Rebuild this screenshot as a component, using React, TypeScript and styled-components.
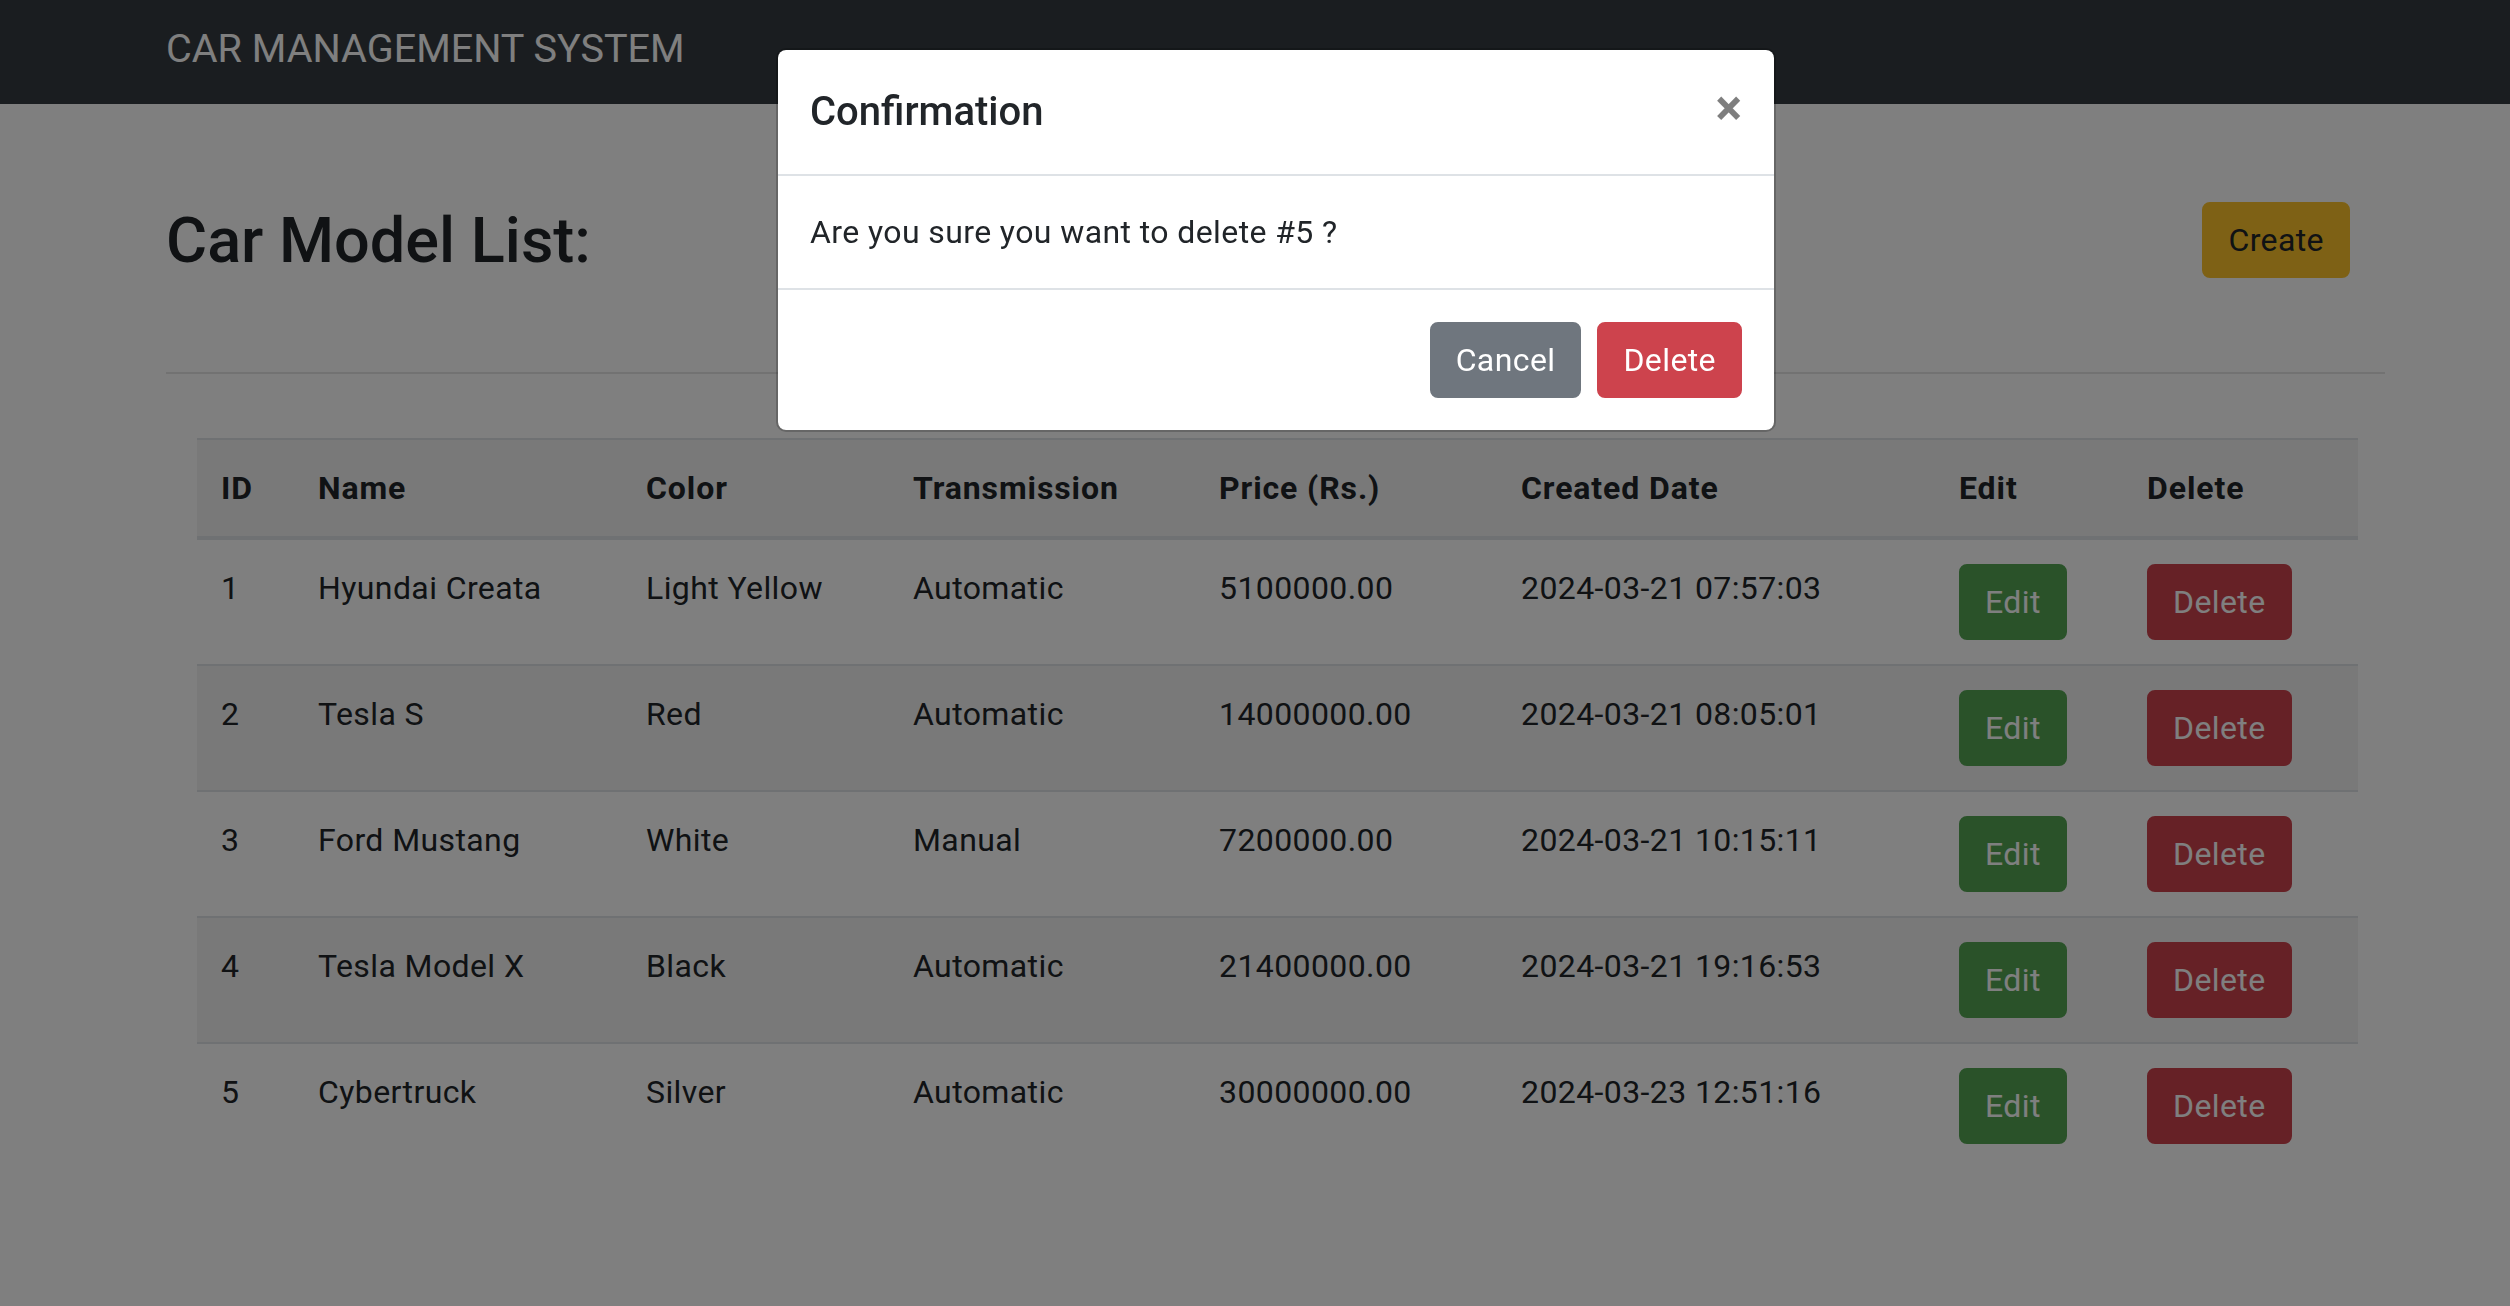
import React from 'react'
import styled, { createGlobalStyle } from 'styled-components'

const GlobalStyle = createGlobalStyle`
  html, body {
    margin: 0;
    padding: 0;
    background: #ffffff;
  }
  body {
    font-family: Roboto, "Liberation Sans", Arial, sans-serif;
    color: #212529;
    font-size: 32px;
    line-height: 48px;
    letter-spacing: 0.4px;
  }
  * { box-sizing: border-box; }
`

type Car = {
  id: number
  name: string
  color: string
  transmission: string
  price: string
  created: string
}

const cars: Car[] = [
  { id: 1, name: 'Hyundai Creata', color: 'Light Yellow', transmission: 'Automatic', price: '5100000.00', created: '2024-03-21 07:57:03' },
  { id: 2, name: 'Tesla S', color: 'Red', transmission: 'Automatic', price: '14000000.00', created: '2024-03-21 08:05:01' },
  { id: 3, name: 'Ford Mustang', color: 'White', transmission: 'Manual', price: '7200000.00', created: '2024-03-21 10:15:11' },
  { id: 4, name: 'Tesla Model X', color: 'Black', transmission: 'Automatic', price: '21400000.00', created: '2024-03-21 19:16:53' },
  { id: 5, name: 'Cybertruck', color: 'Silver', transmission: 'Automatic', price: '30000000.00', created: '2024-03-23 12:51:16' },
]

const colWidths = [97, 328, 267, 306, 302, 438, 188, 235]

const variants = {
  warning: { bg: '#fcc22a', fg: '#212529' },
  success: { bg: '#54a553', fg: '#ffffff' },
  danger: { bg: '#cd434d', fg: '#ffffff' },
  secondary: { bg: '#6f767e', fg: '#ffffff' },
}

type Variant = keyof typeof variants

function App() {
  return (
    <>
      <GlobalStyle />
      <Navbar>
        <Brand>CAR MANAGEMENT SYSTEM</Brand>
      </Navbar>

      <Container>
        <HeaderRow>
          <Title>Car Model List:</Title>
          <Button $variant="warning">Create</Button>
        </HeaderRow>
        <Rule />

        <TableWrap>
          <Table>
            <colgroup>
              {colWidths.map((w, i) => (
                <col key={i} style={{ width: w }} />
              ))}
            </colgroup>
            <thead>
              <tr>
                <th>ID</th>
                <th>Name</th>
                <th>Color</th>
                <th>Transmission</th>
                <th>Price (Rs.)</th>
                <th>Created Date</th>
                <th>Edit</th>
                <th>Delete</th>
              </tr>
            </thead>
            <tbody>
              {cars.map((car) => (
                <tr key={car.id}>
                  <td>{car.id}</td>
                  <td>{car.name}</td>
                  <td>{car.color}</td>
                  <td>{car.transmission}</td>
                  <td>{car.price}</td>
                  <td>{car.created}</td>
                  <td>
                    <Button $variant="success">Edit</Button>
                  </td>
                  <td>
                    <Button $variant="danger">Delete</Button>
                  </td>
                </tr>
              ))}
            </tbody>
          </Table>
        </TableWrap>
      </Container>

      <Backdrop />
      <ModalLayer>
        <ModalBox>
          <ModalHeader>
            <ModalTitle>Confirmation</ModalTitle>
            <CloseButton aria-label="Close">×</CloseButton>
          </ModalHeader>
          <ModalBody>Are you sure you want to delete #5 ?</ModalBody>
          <ModalFooter>
            <Button $variant="secondary">Cancel</Button>
            <Button $variant="danger">Delete</Button>
          </ModalFooter>
        </ModalBox>
      </ModalLayer>
    </>
  )
}

export default App

const Navbar = styled.nav`
  height: 104px;
  background: #343a40;
  display: flex;
  align-items: center;
  padding-left: 166px;
`

const Brand = styled.div`
  color: #ffffff;
  font-size: 39.6px;
  line-height: 60px;
  letter-spacing: 0;
  margin-top: -6px;
`

const Container = styled.main`
  width: 2219px;
  margin-left: 166px;
`

const HeaderRow = styled.div`
  display: flex;
  justify-content: space-between;
  align-items: center;
  height: 76px;
  margin-top: 98px;
  padding-right: 35px;
`

const Title = styled.h2`
  margin: 0;
  font-size: 63px;
  font-weight: 500;
  line-height: 77px;
  letter-spacing: 0;
  color: #212529;
`

const Rule = styled.hr`
  margin: 94px 0 64px;
  border: 0;
  border-top: 2px solid rgba(0, 0, 0, 0.1);
`

const TableWrap = styled.div`
  padding: 0 29px 0 31px;
`

const Table = styled.table`
  width: 100%;
  table-layout: fixed;
  border-collapse: collapse;
  color: #212529;

  th,
  td {
    padding: 24px;
    text-align: left;
    vertical-align: top;
    border-top: 2px solid #dee2e6;
    white-space: nowrap;
  }

  th {
    font-weight: 700;
    letter-spacing: 0.9px;
    border-bottom: 4px solid #dee2e6;
  }

  thead tr,
  tbody tr:nth-of-type(even) {
    background: rgba(0, 0, 0, 0.05);
  }
`

const Button = styled.button<{ $variant: Variant }>`
  font-family: inherit;
  font-size: 32px;
  line-height: 48px;
  letter-spacing: 0.4px;
  padding: 12px 24px;
  border: 2px solid ${(p) => variants[p.$variant].bg};
  border-radius: 8px;
  background: ${(p) => variants[p.$variant].bg};
  color: ${(p) => variants[p.$variant].fg};
  cursor: pointer;
`

const Backdrop = styled.div`
  position: fixed;
  inset: 0;
  background: rgba(0, 0, 0, 0.5);
  z-index: 10;
`

const ModalLayer = styled.div`
  position: fixed;
  top: 0;
  left: 0;
  right: 0;
  z-index: 20;
  display: flex;
  justify-content: center;
  padding: 48px 0 0 42px;
`

const ModalBox = styled.div`
  width: 1000px;
  background: #ffffff;
  border: 2px solid rgba(0, 0, 0, 0.2);
  border-radius: 10px;
  background-clip: padding-box;
`

const ModalHeader = styled.div`
  display: flex;
  justify-content: space-between;
  align-items: center;
  padding: 32px;
  border-bottom: 2px solid #dee2e6;
`

const ModalTitle = styled.h5`
  margin: 0;
  font-size: 40px;
  font-weight: 500;
  line-height: 60px;
  letter-spacing: 0;
`

const CloseButton = styled.button`
  background: transparent;
  border: 0;
  padding: 0;
  font-family: inherit;
  font-size: 50px;
  font-weight: 700;
  line-height: 1;
  color: #000;
  opacity: 0.5;
  text-shadow: 0 2px 0 #fff;
  margin-top: -8px;
`

const ModalBody = styled.div`
  padding: 32px;
  font-size: 32px;
  line-height: 48px;
`

const ModalFooter = styled.div`
  display: flex;
  justify-content: flex-end;
  align-items: center;
  gap: 16px;
  padding: 32px;
  border-top: 2px solid #dee2e6;
`
